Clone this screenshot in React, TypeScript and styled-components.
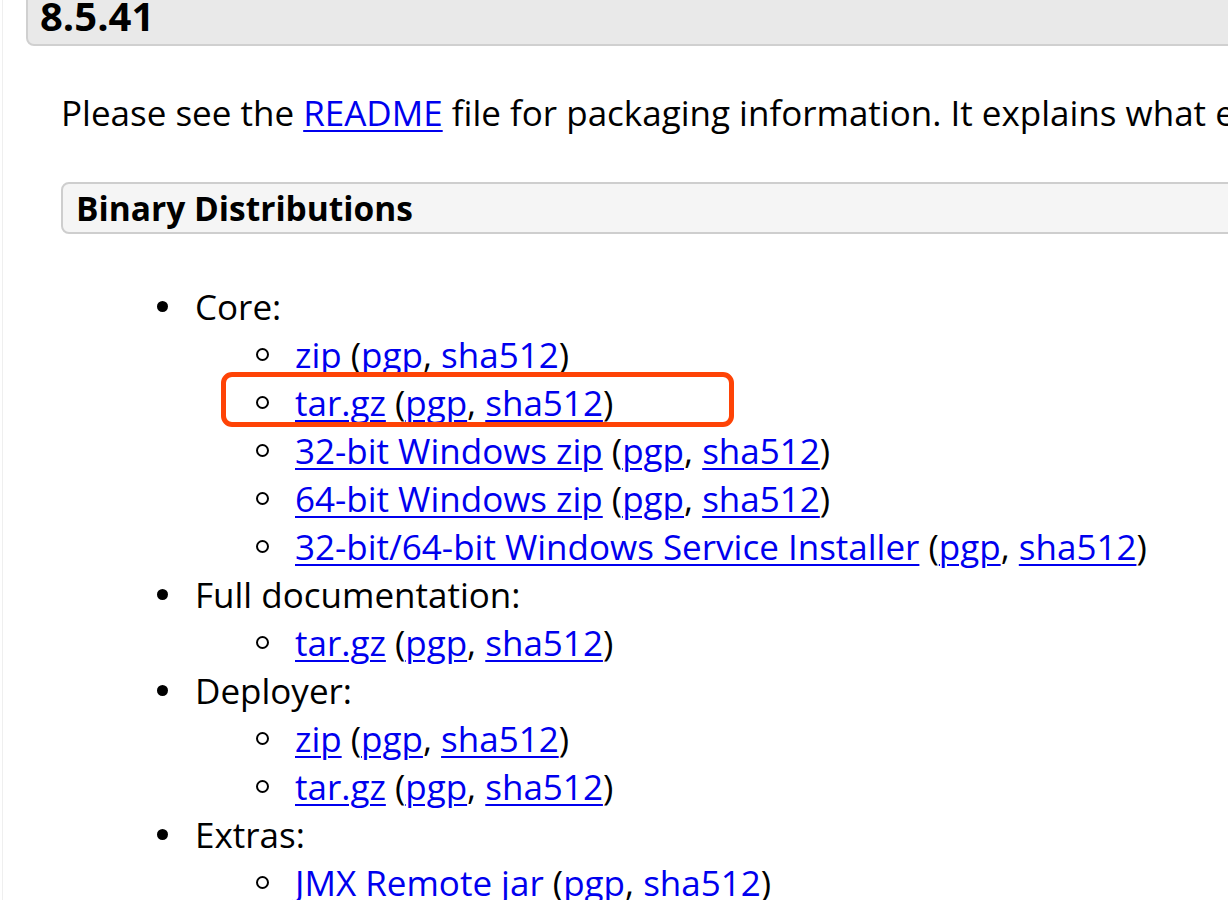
import React from "react";
import styled, { createGlobalStyle } from "styled-components";

const Global = createGlobalStyle`
  html, body {
    margin: 0;
    padding: 0;
    background: #ffffff;
    overflow: hidden;
  }
  body {
    font-family: "Open Sans", "DejaVu Sans", sans-serif;
    color: #000;
  }
`;

const Page = styled.div`
  position: relative;
  display: flow-root;
  width: 1500px;
  min-height: 900px;
  margin-left: 2px;
  border-left: 1px solid #efefef;
  padding-left: 23px;
`;

const VersionHeading = styled.h3`
  margin: -12px 0 0 0;
  padding: 0 12px 2px 12px;
  font-size: 40px;
  line-height: 52px;
  font-weight: 700;
  background: #e9e9e9;
  border: 2px solid #d0d0d0;
  border-radius: 8px;
`;

const Content = styled.div`
  margin-left: 35px;
`;

const Para = styled.p`
  margin: 43px 0 0 0;
  font-size: 35px;
  line-height: 48px;
  white-space: nowrap;
`;

const Link = styled.a`
  color: #0000ee;
  text-decoration: underline;
  text-decoration-thickness: 2px;
  text-underline-offset: 4px;
`;

const SectionBox = styled.h3`
  margin: 45px 0 0 0;
  padding: 0 13px;
  font-size: 33.5px;
  line-height: 48px;
  font-weight: 700;
  background: #f5f5f5;
  border: 2px solid #cecece;
  border-radius: 8px;
`;

const TopList = styled.ul`
  list-style: none;
  margin: 49px 0 0 0;
  padding-left: 134px;
  font-size: 35px;
  line-height: 48px;
`;

const TopItem = styled.li`
  position: relative;
  &::before {
    content: "";
    position: absolute;
    left: -38px;
    top: 18px;
    width: 11px;
    height: 11px;
    border-radius: 50%;
    background: #000;
  }
`;

const SubList = styled.ul`
  list-style: none;
  margin: 0;
  padding-left: 100px;
`;

const SubItem = styled.li`
  position: relative;
  white-space: nowrap;
  &::before {
    content: "";
    position: absolute;
    left: -39px;
    top: 17px;
    width: 9px;
    height: 9px;
    border-radius: 50%;
    border: 2px solid #000;
  }
`;

const Highlight = styled.div`
  position: absolute;
  left: 218px;
  top: 372px;
  width: 503px;
  height: 45px;
  border: 5px solid #fe4306;
  border-radius: 11px;
  pointer-events: none;
`;

type Dl = { label: string };

const Download: React.FC<Dl> = ({ label }) => (
  <SubItem>
    <Link href="#">{label}</Link> (<Link href="#">pgp</Link>,{" "}
    <Link href="#">sha512</Link>)
  </SubItem>
);

const groups: { title: string; items: string[] }[] = [
  {
    title: "Core:",
    items: [
      "zip",
      "tar.gz",
      "32-bit Windows zip",
      "64-bit Windows zip",
      "32-bit/64-bit Windows Service Installer",
    ],
  },
  { title: "Full documentation:", items: ["tar.gz"] },
  { title: "Deployer:", items: ["zip", "tar.gz"] },
  { title: "Extras:", items: ["JMX Remote jar"] },
];

export default function App() {
  return (
    <>
      <Global />
      <Page>
        <VersionHeading>8.5.41</VersionHeading>
        <Content>
          <Para>
            Please see the <Link href="#">README</Link> file for packaging
            information. It explains what every distribution contains.
          </Para>
          <SectionBox>Binary Distributions</SectionBox>
          <TopList>
            {groups.map((g) => (
              <TopItem key={g.title}>
                {g.title}
                <SubList>
                  {g.items.map((it, i) => (
                    <Download key={i} label={it} />
                  ))}
                </SubList>
              </TopItem>
            ))}
          </TopList>
        </Content>
        <Highlight />
      </Page>
    </>
  );
}
